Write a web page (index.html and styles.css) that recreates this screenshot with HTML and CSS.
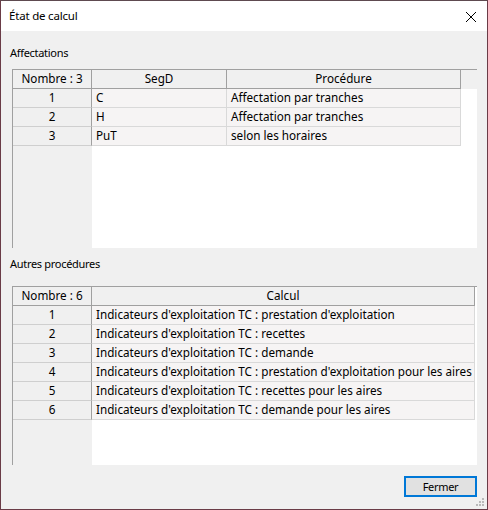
FILE: index.html
```html
<!DOCTYPE html>
<html lang="fr">
<head>
<meta charset="utf-8">
<title>État de calcul</title>
<link rel="stylesheet" href="styles.css">
</head>
<body>
<div class="window">
  <div class="titlebar">
    <span class="title">État de calcul</span>
    <svg class="close" width="12" height="12" viewBox="0 0 12 12"><path d="M1 1 L11 11 M11 1 L1 11" stroke="#000" stroke-width="1" fill="none"/></svg>
  </div>
  <div class="content">
    <div class="label l1">Affectations</div>
    <div class="grid">
      <div class="row head">
        <div class="cell rh">Nombre : 3</div>
        <div class="cell c-seg">SegD</div>
        <div class="cell c-proc">Procédure</div>
        <div class="cell fill1"></div>
      </div>
      <div class="row">
        <div class="cell rh">1</div>
        <div class="cell c-seg">C</div>
        <div class="cell c-proc">Affectation par tranches</div>
      </div>
      <div class="row">
        <div class="cell rh">2</div>
        <div class="cell c-seg">H</div>
        <div class="cell c-proc">Affectation par tranches</div>
      </div>
      <div class="row">
        <div class="cell rh">3</div>
        <div class="cell c-seg">PuT</div>
        <div class="cell c-proc">selon les horaires</div>
      </div>
    </div>
    <div class="label l2">Autres procédures</div>
    <div class="grid">
      <div class="row head">
        <div class="cell rh">Nombre : 6</div>
        <div class="cell c-calc">Calcul</div>
        <div class="cell fill2"></div>
      </div>
      <div class="row">
        <div class="cell rh">1</div>
        <div class="cell c-calc">Indicateurs d'exploitation TC : prestation d'exploitation</div>
      </div>
      <div class="row">
        <div class="cell rh">2</div>
        <div class="cell c-calc">Indicateurs d'exploitation TC : recettes</div>
      </div>
      <div class="row">
        <div class="cell rh">3</div>
        <div class="cell c-calc">Indicateurs d'exploitation TC : demande</div>
      </div>
      <div class="row">
        <div class="cell rh">4</div>
        <div class="cell c-calc">Indicateurs d'exploitation TC : prestation d'exploitation pour les aires</div>
      </div>
      <div class="row">
        <div class="cell rh">5</div>
        <div class="cell c-calc">Indicateurs d'exploitation TC : recettes pour les aires</div>
      </div>
      <div class="row">
        <div class="cell rh">6</div>
        <div class="cell c-calc">Indicateurs d'exploitation TC : demande pour les aires</div>
      </div>
    </div>
    <div class="footer">
      <button class="btn">Fermer</button>
    </div>
  </div>
  <svg class="grip" width="9" height="9" viewBox="0 0 9 9">
    <rect x="6" y="0" width="2" height="2" fill="#b9b9b9"/>
    <rect x="3" y="3" width="2" height="2" fill="#b9b9b9"/>
    <rect x="6" y="3" width="2" height="2" fill="#b9b9b9"/>
    <rect x="0" y="6" width="2" height="2" fill="#b9b9b9"/>
    <rect x="3" y="6" width="2" height="2" fill="#b9b9b9"/>
    <rect x="6" y="6" width="2" height="2" fill="#b9b9b9"/>
  </svg>
</div>
</body>
</html>
```

FILE: styles.css
```css
html, body {
  margin: 0;
  padding: 0;
  background: #3a3a3a;
}
body {
  font-family: "Noto Sans", "DejaVu Sans", sans-serif;
  font-size: 12px;
  color: #000;
}
.window {
  position: relative;
  width: 488px;
  height: 510px;
  box-sizing: border-box;
  border: 1px solid #6a3c47;
  border-top-color: #5e4a50;
  background: #f0f0f0;
  display: flex;
  flex-direction: column;
}
.titlebar {
  height: 30px;
  background: #fff;
  display: flex;
  align-items: center;
  justify-content: space-between;
  padding: 0 10px 0 8px;
  flex: none;
}
.title {
  font-size: 11.5px;
  letter-spacing: -0.2px;
  line-height: 16px;
}
.close {
  display: block;
  margin-top: 1px;
}
.content {
  flex: 1;
  display: flex;
  flex-direction: column;
  padding: 0 10px 0 11px;
}
.label {
  line-height: 16px;
  font-size: 11px;
  letter-spacing: -0.3px;
  margin-left: -2px;
}
.l1 {
  margin-top: 14px;
  margin-bottom: 8px;
}
.l2 {
  margin-top: 8px;
  margin-bottom: 14px;
}
.grid {
  width: 465px;
  height: 179px;
  box-sizing: border-box;
  border-left: 1px solid #a0a0a0;
  border-top: 1px solid #a0a0a0;
  background: linear-gradient(to right, #f0f0f0 79px, #fff 79px);
  display: flex;
  flex-direction: column;
  flex: none;
}
.row {
  display: flex;
  height: 19px;
  flex: none;
}
.cell {
  box-sizing: border-box;
  height: 19px;
  line-height: 17px;
  font-size: 11.7px;
  padding: 0 4px;
  white-space: nowrap;
  overflow: hidden;
  flex: none;
  background: #f6f4f4;
  border-right: 1px solid #d9d9d9;
  border-bottom: 1px solid #d9d9d9;
}
.cell.rh {
  width: 79px;
  text-align: center;
  background: #f0f0f0;
  border-right-color: #a0a0a0;
  border-bottom-color: #cfcfcf;
}
.head .cell {
  background: #f0f0f0;
  text-align: center;
  border-right-color: #a0a0a0;
  border-bottom-color: #a0a0a0;
}
.c-seg { width: 135px; }
.c-proc { width: 234px; }
.c-calc { width: 383px; }
.head .fill1,
.head .fill2 {
  flex: 1 1 0;
  min-width: 0;
  padding: 0;
  border: none;
}
.head .fill1 {
  background: #f0f0f0;
}
.head .fill2 {
  background: #fff;
}
.footer {
  display: flex;
  justify-content: flex-end;
  margin-top: 11px;
}
.btn {
  width: 73px;
  height: 21px;
  box-sizing: border-box;
  border: 2px solid #0078d7;
  background: #e1e1e1;
  font-family: "Noto Sans", "DejaVu Sans", sans-serif;
  font-size: 11px;
  letter-spacing: -0.3px;
  color: #000;
  padding: 0;
  line-height: 15px;
}
.grip {
  position: absolute;
  right: 2px;
  bottom: 2px;
}
```
